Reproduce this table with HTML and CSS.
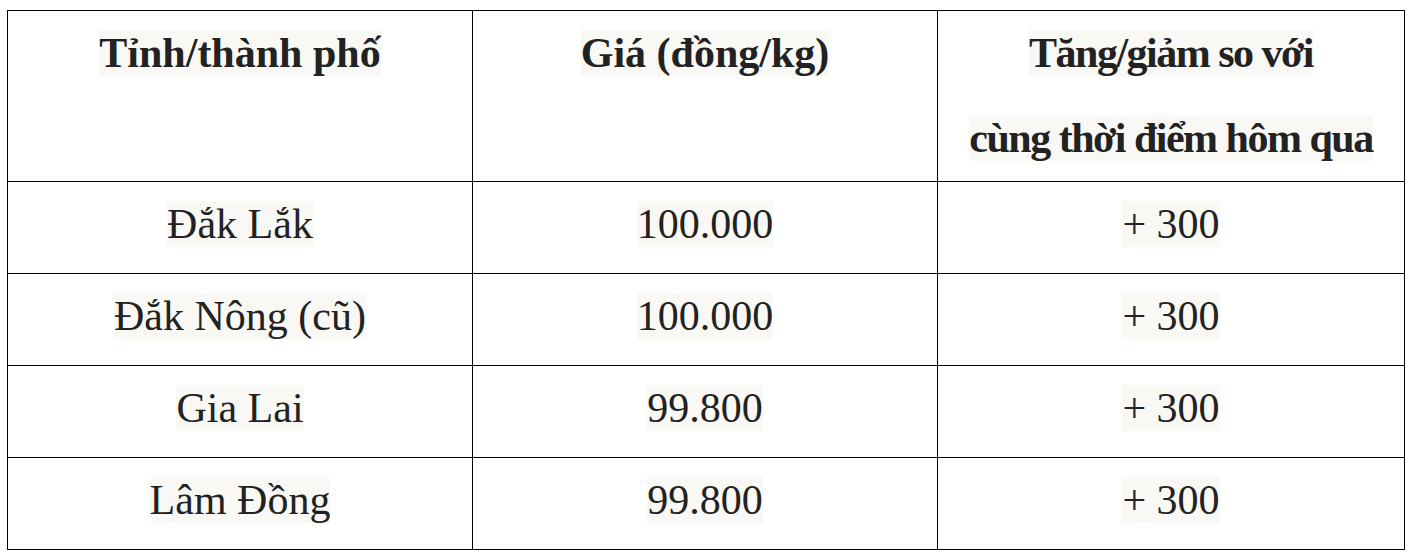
FILE: index.html
```html
<!DOCTYPE html>
<html lang="vi">
<head>
<meta charset="utf-8">
<title>Giá</title>
<link rel="stylesheet" href="styles.css">
</head>
<body>
<table class="price-table">
  <colgroup>
    <col class="c1"><col class="c2"><col class="c3">
  </colgroup>
  <thead>
    <tr>
      <th><span class="hl">Tỉnh/thành phố</span></th>
      <th><span class="hl">Giá (đồng/kg)</span></th>
      <th class="tight"><span class="hl">Tăng/giảm so với</span><br><span class="hl">cùng thời điểm hôm qua</span></th>
    </tr>
  </thead>
  <tbody>
    <tr><td><span class="hl">Đắk Lắk</span></td><td><span class="hl">100.000</span></td><td><span class="hl">+ 300</span></td></tr>
    <tr><td><span class="hl">Đắk Nông (cũ)</span></td><td><span class="hl">100.000</span></td><td><span class="hl">+ 300</span></td></tr>
    <tr><td><span class="hl">Gia Lai</span></td><td><span class="hl">99.800</span></td><td><span class="hl">+ 300</span></td></tr>
    <tr><td><span class="hl">Lâm Đồng</span></td><td><span class="hl">99.800</span></td><td><span class="hl">+ 300</span></td></tr>
  </tbody>
</table>
</body>
</html>
```
FILE: styles.css
```css
html, body {
  margin: 0;
  background: #ffffff;
}
body {
  padding: 10px 0 0 7px;
  font-family: "Liberation Serif", "Times New Roman", serif;
  color: #222222;
}
.price-table {
  border-collapse: collapse;
  width: 1397px;
  table-layout: fixed;
}
.c1 { width: 465px; }
.c2 { width: 465px; }
.c3 { width: 467px; }
.price-table th,
.price-table td {
  border: 1px solid #000000;
  text-align: center;
  vertical-align: top;
  font-size: 42px;
  line-height: 85px;
  padding: 0;
}
.price-table th {
  font-weight: bold;
}
.price-table th.tight .hl {
  letter-spacing: -1.5px;
}
.price-table td {
  font-weight: normal;
  padding-bottom: 6px;
}
.hl {
  background: #f9f8f5;
}
```
